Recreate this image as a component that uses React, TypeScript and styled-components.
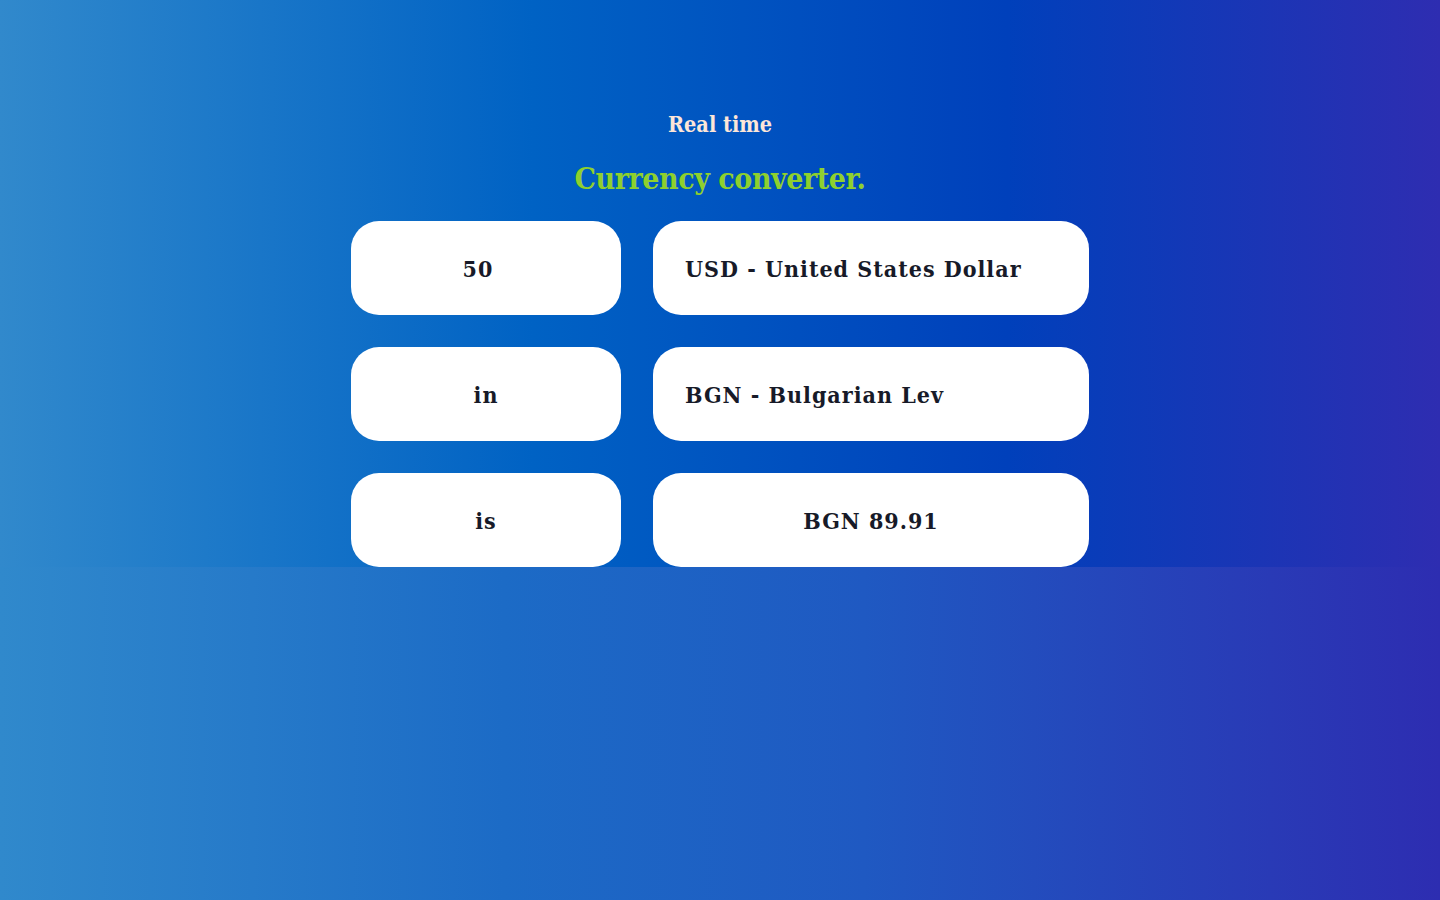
import React from "react";
import styled, { createGlobalStyle } from "styled-components";

const Global = createGlobalStyle`
  html, body { margin: 0; padding: 0; }
  body {
    min-height: 900px;
    background: linear-gradient(to right, #3089cc 0%, #1c6bc6 35%, #1f59c2 60%, #2d2db1 100%);
    font-family: "DejaVu Serif", serif;
  }
`;

const Hero = styled.section`
  height: 567px;
  background: linear-gradient(to right, #3189cc 0%, #0062c4 37%, #0040bb 70%, #2e2db1 100%);
  display: flex;
  flex-direction: column;
  align-items: center;
  box-sizing: border-box;
  padding-top: 111px;
`;

const Kicker = styled.h2`
  margin: 0;
  font-family: "DejaVu Serif Condensed", "DejaVu Serif", serif;
  font-weight: 700;
  font-size: 21.5px;
  line-height: 28px;
  color: #fde6d8;
`;

const Title = styled.h1`
  margin: 22px 0 0;
  font-family: "DejaVu Serif Condensed", "DejaVu Serif", serif;
  font-weight: 700;
  font-size: 30px;
  line-height: 36px;
  color: #8ed02e;
  letter-spacing: -0.45px;
`;

const Grid = styled.div`
  margin-top: 24px;
  display: grid;
  grid-template-columns: 270px 436px;
  grid-auto-rows: 94px;
  gap: 32px;
`;

const Box = styled.div<{ $align?: "center" | "left" }>`
  background: #ffffff;
  border-radius: 28px;
  display: flex;
  align-items: center;
  justify-content: ${(p) => (p.$align === "left" ? "flex-start" : "center")};
  padding: 0 32px;
  box-sizing: border-box;
  font-family: "DejaVu Serif Condensed", "DejaVu Serif", serif;
  font-weight: 700;
  font-size: 23px;
  letter-spacing: 1px;
  color: #171a28;
`;

const InputBox = styled(Box)`
  padding-right: 48px;
`;

export default function App() {
  return (
    <>
      <Global />
      <Hero>
        <Kicker>Real time</Kicker>
        <Title>Currency converter.</Title>
        <Grid>
          <InputBox>50</InputBox>
          <Box $align="left">USD - United States Dollar</Box>
          <Box>in</Box>
          <Box $align="left">BGN - Bulgarian Lev</Box>
          <Box>is</Box>
          <Box>BGN 89.91</Box>
        </Grid>
      </Hero>
    </>
  );
}
